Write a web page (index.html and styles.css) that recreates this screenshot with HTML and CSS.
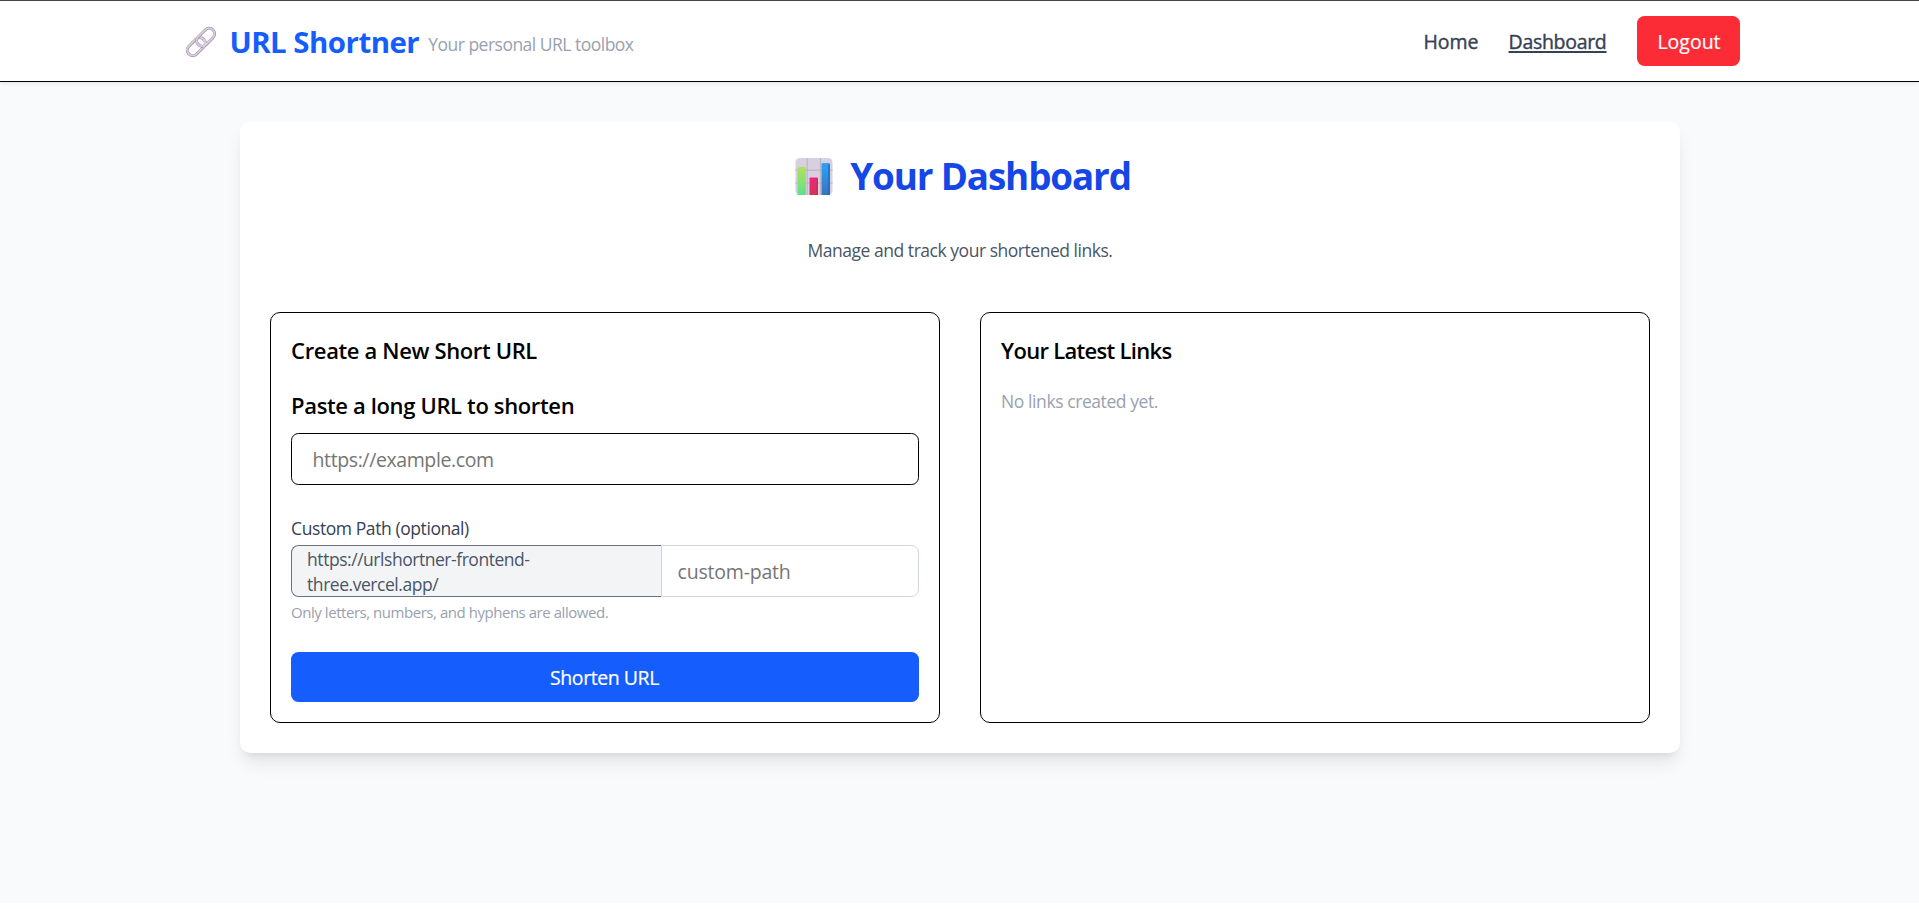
FILE: index.html
```html
<!DOCTYPE html>
<html lang="en">
<head>
<meta charset="utf-8">
<title>URL Shortner</title>
<link rel="stylesheet" href="styles.css">
</head>
<body>
<header class="header">
  <div class="header-inner">
    <div class="brand">
      <svg class="brand-icon" viewBox="0 0 30 30" fill="none">
        <g transform="rotate(-45 15 15)">
          <rect x="-1" y="9.800" width="19.500" height="10.400" rx="5.200" stroke="#9c8ba8" stroke-width="2.700"/>
          <rect x="-1" y="9.600" width="19.500" height="10.400" rx="5.200" stroke="#d8cddd" stroke-width="1.700"/>
          <rect x="11.500" y="9.800" width="19.500" height="10.400" rx="5.200" stroke="#9c8ba8" stroke-width="2.700"/>
          <rect x="11.500" y="9.600" width="19.500" height="10.400" rx="5.200" stroke="#d8cddd" stroke-width="1.700"/>
          <path d="M13 20h.3a5.200 5.200 0 0 0 5.200-5.200" stroke="#d8cddd" stroke-width="2"/>
        </g>
      </svg>
      <span class="brand-name">URL Shortner</span>
      <span class="tagline">Your personal URL toolbox</span>
    </div>
    <nav class="nav">
      <a class="nav-link home">Home</a>
      <a class="nav-link active">Dashboard</a>
      <button class="logout">Logout</button>
    </nav>
  </div>
</header>
<div class="page">
<main class="card">
  <h1 class="title">
    <svg class="chart-icon" viewBox="0 0 38 38">
      <defs>
        <linearGradient id="green" x1="0" y1="0" x2="0" y2="1"><stop offset="0" stop-color="#b0e35a"/><stop offset="1" stop-color="#5ee08c"/></linearGradient>
        <linearGradient id="pink" x1="0" y1="0" x2="0" y2="1"><stop offset="0" stop-color="#f0267e"/><stop offset="1" stop-color="#d03455"/></linearGradient>
        <linearGradient id="blue" x1="0" y1="0" x2="0" y2="1"><stop offset="0" stop-color="#2ba4fa"/><stop offset="1" stop-color="#3a72bd"/></linearGradient>
      </defs>
      <rect x="0.5" y="0" width="37" height="37" rx="4.5" fill="#d8d0de"/>
      <path d="M12.2 0v37M25.4 0v37M.5 12.2h37M.5 25h37" stroke="#b9b0c0" stroke-width="1"/>
      <path d="M2.5 37V10.2q0-1.2 1.2-1.2h6q1.2 0 1.2 1.2V37z" fill="url(#green)"/>
      <path d="M14.5 37V20.6q0-1.2 1.2-1.2h6q1.2 0 1.2 1.2V37z" fill="url(#pink)"/>
      <path d="M26.5 37V6.2q0-1.2 1.2-1.2h6q1.2 0 1.2 1.2V37z" fill="url(#blue)"/>
      <path d="M34 6v31" stroke="#1764b5" stroke-width="1.2"/>
      <path d="M22.2 20v17" stroke="#bd2860" stroke-width="1"/>
    </svg>
    <span>Your Dashboard</span>
  </h1>
  <p class="subtitle">Manage and track your shortened links.</p>
  <div class="panels">
    <section class="panel">
      <h2 class="panel-title create">Create a New Short URL</h2>
      <h3 class="panel-title paste">Paste a long URL to shorten</h3>
      <input class="long-url" placeholder="https://example.com">
      <div class="label">Custom Path (optional)</div>
      <div class="path-row">
        <div class="prefix">https://urlshortner-frontend-<br>three.vercel.app/</div>
        <input class="custom-path" placeholder="custom-path">
      </div>
      <p class="hint">Only letters, numbers, and hyphens are allowed.</p>
      <button class="submit">Shorten URL</button>
    </section>
    <section class="panel">
      <h2 class="panel-title latest">Your Latest Links</h2>
      <p class="empty">No links created yet.</p>
    </section>
  </div>
</main>
</div>
</body>
</html>
```
FILE: styles.css
```css
* { box-sizing: border-box; margin: 0; padding: 0; }
html { font-size: 20px; background: #fff; }
body {
  background: #fff;
  font-family: "Open Sans", "Noto Sans", sans-serif;
  line-height: 1.5;
  white-space: nowrap;
  overflow: hidden;
}
input, button { font: inherit; }
.header {
  position: relative;
  height: 82px;
  background: #fff;
  border-top: 1px solid #4a3f4b;
  border-bottom: 1px solid #000;
  box-shadow: 0 1px 4px rgba(0, 0, 0, .1);
}
.header-inner {
  width: 1560px;
  height: 80px;
  margin: 0 auto;
  padding-left: 5px;
  display: flex;
  justify-content: space-between;
  align-items: center;
}
.brand { display: flex; align-items: center; }
.brand-icon { width: 32px; height: 32px; margin: 3px 13px 0 0; }
.brand-name { padding-top: 2px; font-size: 29.4px; font-weight: 700; color: #155dfc; letter-spacing: -.5px; margin-right: 9px; }
.tagline { padding-top: 6px; font-size: 17.5px; color: #99a1af; letter-spacing: -.51px; }
.nav { display: flex; align-items: center; gap: 30px; font-size: 19.5px; }
.nav-link { padding-top: 2px; color: #364153; -webkit-text-stroke: .4px #364153; }
.active { letter-spacing: -.3px; text-decoration: underline; text-decoration-thickness: 2px; text-underline-offset: 2px; }
.logout { width: 103px; height: 50px; padding: 2px 0 0 2px; border: 0; border-radius: 7.5px; background: #fb2c36; color: #fff; -webkit-text-stroke: .2px #fff; }
.page { height: 821px; background: #f9fafc; overflow: hidden; }
.card {
  width: 1440px;
  height: 631px;
  margin: 40px auto 0;
  padding: 30px;
  background: #fff;
  border-radius: 10px;
  box-shadow: 0 12px 19px -4px rgba(0, 0, 0, .1), 0 5px 8px -5px rgba(0, 0, 0, .1);
}
.title { display: flex; align-items: center; justify-content: center; height: 50px; padding-left: 7px; font-size: 36.8px; line-height: 48px; letter-spacing: -1.12px; color: #1447e6; }
.title span { padding-bottom: 2px; }
.chart-icon { width: 38px; height: 38px; margin-right: 17px; }
.subtitle { height: 30px; margin-top: 33px; padding-left: 1px; text-align: center; font-size: 17.5px; line-height: 30px; letter-spacing: -.47px; color: #4a5565; }
.panels { display: grid; grid-template-columns: repeat(2, minmax(0, 1fr)); gap: 40px; margin-top: 47px; }
.panel { height: 411px; padding: 20px; border: 1px solid #000; border-radius: 10px; }
.panel-title { padding-left: .6px; font-size: 22px; line-height: 35px; font-weight: 600; color: #000; letter-spacing: -.36px; }
.panel-title.latest { letter-spacing: -.7px; }
.paste { margin-top: 20px; }
input { outline: 0; background: #fff; color: #000; font-size: 19.5px; }
input::placeholder { color: #757575; opacity: 1; }
.long-url { display: block; width: 100%; height: 52px; margin-top: 10px; padding: 1px 21px 0; border: 1px solid #000; border-radius: 7.5px; letter-spacing: -.39px; }
.label { margin-top: 28px; height: 32px; padding-left: .6px; line-height: 30px; font-size: 17.5px; letter-spacing: -.42px; color: #364153; }
.path-row { display: flex; height: 52px; }
.prefix { width: 370px; padding: 1px 15px 0 15.6px; border: 1px solid #6a7282; border-right: 0; border-radius: 7.5px 0 0 7.5px; background: #f3f4f6; color: #4a5565; font-size: 17.5px; line-height: 25px; letter-spacing: -.46px; }
.custom-path { flex: 1; min-width: 0; padding: 1px 15px 0 16px; border: 1px solid #d1d5dc; border-radius: 0 7.5px 7.5px 0; letter-spacing: -.2px; }
.hint { margin-top: 5px; height: 20px; padding-left: .6px; font-size: 15px; line-height: 20px; letter-spacing: -.46px; color: #99a1af; }
.submit { display: block; width: 100%; height: 50px; margin-top: 30px; padding-top: 2px; border: 0; border-radius: 7.5px; background: #155dfc; color: #fff; font-size: 19.5px; letter-spacing: -.45px; -webkit-text-stroke: .2px #fff; }
.empty { margin-top: 18px; padding-left: .6px; font-size: 17.5px; line-height: 30px; letter-spacing: -.42px; color: #99a1af; }
```
